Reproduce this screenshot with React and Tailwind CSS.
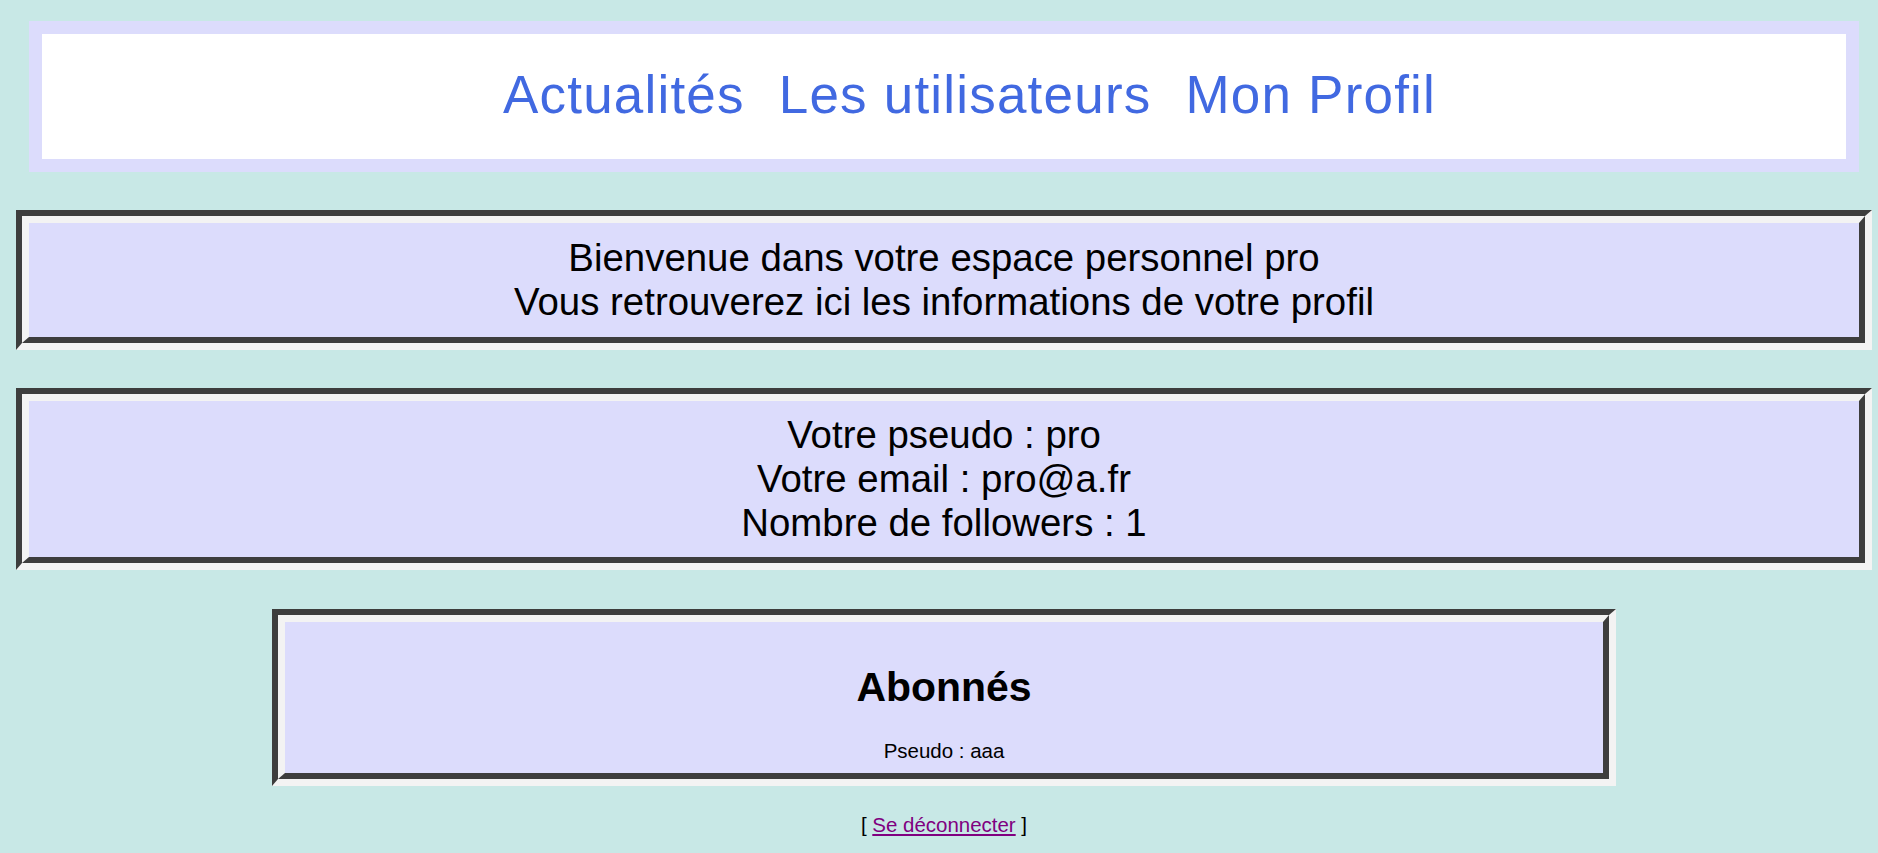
import React from "react";

function Groove({ className = "", innerClassName = "", children }) {
  return (
    <div
      className={
        "border-t-[6px] border-l-[6px] border-b-[7px] border-r-[7px] border-t-[#3d3d3d] border-l-[#3d3d3d] border-b-[#f3f3f3] border-r-[#f3f3f3] " +
        className
      }
    >
      <div
        className={
          "border-t-[7px] border-l-[7px] border-b-[6px] border-r-[6px] border-t-[#f3f3f3] border-l-[#f3f3f3] border-b-[#3d3d3d] border-r-[#3d3d3d] bg-[#dcdcfc] text-center text-black " +
          innerClassName
        }
      >
        {children}
      </div>
    </div>
  );
}

export default function App() {
  return (
    <div className="min-h-screen bg-[#c8e8e6] font-['Liberation_Sans',Arial,sans-serif] text-black">
      <div className="pl-[16px] pr-[6px] pt-[21px] pb-[17px]">
        <nav className="mx-[13px] bg-[#dcdcfc] p-[13px]">
          <div className="flex justify-center gap-[34px] bg-white pl-[51px] pt-[30px] pb-[34px] text-[53px] leading-[61px] tracking-[1.2px] text-[#4169e1]">
            <a href="#" className="text-[#4169e1] no-underline">Actualités</a>
            <a href="#" className="text-[#4169e1] no-underline">Les utilisateurs</a>
            <a href="#" className="text-[#4169e1] no-underline">Mon Profil</a>
          </div>
        </nav>

        <Groove className="mt-[38px]" innerClassName="py-[13px] text-[38.4px] leading-[44px]">
          <div>Bienvenue dans votre espace personnel pro</div>
          <div>Vous retrouverez ici les informations de votre profil</div>
        </Groove>

        <Groove className="mt-[38px]" innerClassName="py-[12px] text-[38.4px] leading-[44px]">
          <div>Votre pseudo : pro</div>
          <div>Votre email : pro@a.fr</div>
          <div>Nombre de followers : 1</div>
        </Groove>

        <Groove className="mx-auto mt-[39px] w-[1344px]" innerClassName="pt-[13px] pb-[11px]">
          <h2 className="mt-[29px] mb-[29px] text-[40.96px] font-bold leading-[46px]">Abonnés</h2>
          <p className="text-[20.48px] leading-[23px]">Pseudo : aaa</p>
        </Groove>

        <p className="mt-[27px] text-center text-[20.48px] leading-[23px]">
          [ <a href="#" className="text-[#800080] underline">Se déconnecter</a> ]
        </p>
      </div>
    </div>
  );
}
